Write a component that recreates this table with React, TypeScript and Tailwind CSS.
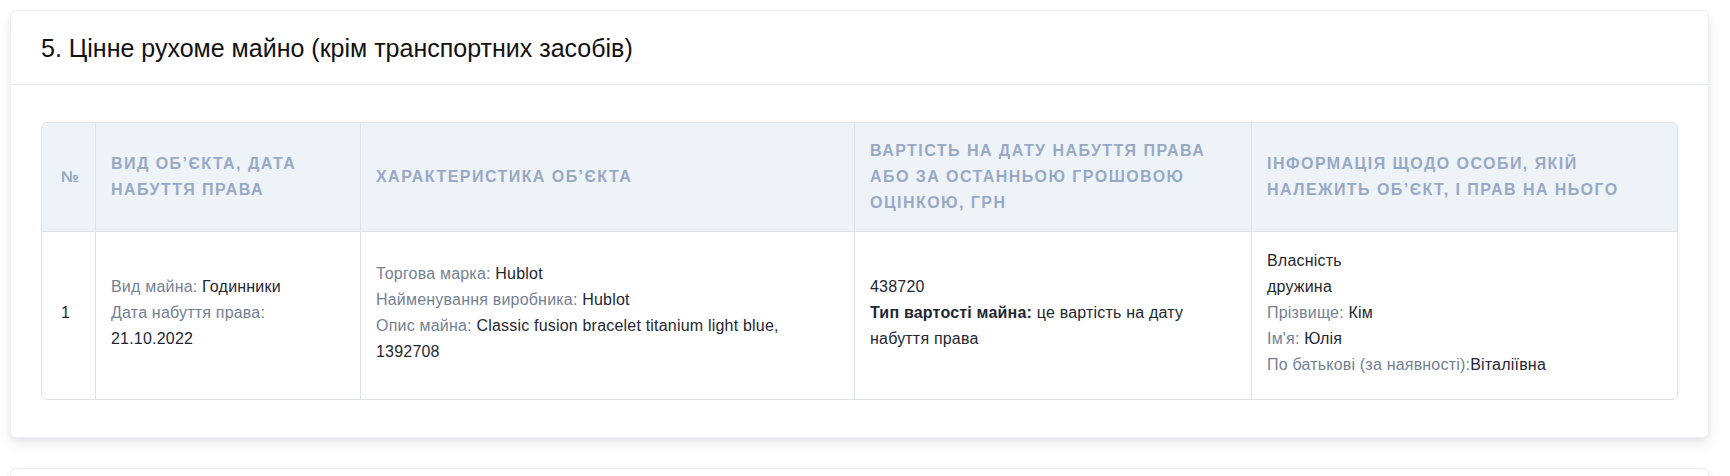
type Line = { label?: string; value?: string; bold?: boolean };

const cellBase = "border-l border-[#dfe3e8] px-[15px] align-middle";
const thClass = `${cellBase} h-[109px] border-b bg-[#eef3f8] text-left text-[16px] font-bold uppercase leading-[26px] tracking-[1.45px] text-[#98a9c6]`;
const tdClass = `${cellBase} h-[167px] pb-[5px] text-[16px] leading-[26px] tracking-[0.2px] text-[#1f2733]`;

const columns = [
  { title: "№", width: "w-[53px]" },
  { title: "Вид об’єкта, дата набуття права", width: "w-[265px]" },
  { title: "Характеристика об’єкта", width: "w-[494px]" },
  { title: "Вартість на дату набуття права або за останньою грошовою оцінкою, грн", width: "w-[397px]" },
  { title: "Інформація щодо особи, якій належить об’єкт, і прав на нього", width: "" },
];

const rows: Line[][][] = [
  [
    [{ value: "1" }],
    [
      { label: "Вид майна:", value: "Годинники" },
      { label: "Дата набуття права:", value: "21.10.2022" },
    ],
    [
      { label: "Торгова марка:", value: "Hublot" },
      { label: "Найменування виробника:", value: "Hublot" },
      { label: "Опис майна:", value: "Classic fusion bracelet titanium light blue, 1392708" },
    ],
    [
      { value: "438720" },
      { label: "Тип вартості майна:", value: "це вартість на дату набуття права", bold: true },
    ],
    [
      { value: "Власність" },
      { value: "дружина" },
      { label: "Прізвище:", value: "Кім" },
      { label: "Ім'я:", value: "Юлія" },
      { label: "По батькові (за наявності):", value: "Віталіївна" },
    ],
  ],
];

function CellLine({ line, tight }: { line: Line; tight?: boolean }) {
  return (
    <div>
      {line.label && (
        <span className={line.bold ? "font-bold text-[#1f2733]" : "text-[#748194]"}>{line.label}</span>
      )}
      {line.label && !tight ? " " : null}
      {line.value}
    </div>
  );
}

export default function App() {
  return (
    <div className="min-h-screen bg-white pl-[10px] pr-[21px] pt-[10px] font-['Liberation_Sans',Arial,sans-serif]">
      <section className="rounded-md border border-[#eceff4] bg-white shadow-[0_7px_14px_0_rgba(65,69,88,0.08),0_3px_6px_0_rgba(0,0,0,0.05)]">
        <div className="flex h-[74px] items-center border-b border-[#e6e9ee] px-[30px]">
          <h2 className="text-[25px] font-normal leading-[1.2] text-[#111]">
            5. Цінне рухоме майно (крім транспортних засобів)
          </h2>
        </div>

        <div className="px-[30px] py-[37px]">
          <div className="overflow-hidden rounded-md border border-[#dfe3e8]">
            <table className="w-full table-fixed border-separate border-spacing-0">
              <thead>
                <tr>
                  {columns.map((c, i) => (
                    <th
                      key={i}
                      className={`${thClass} ${c.width} ${i === 0 ? "border-l-0 pl-[19px]" : ""}`}
                    >
                      {c.title}
                    </th>
                  ))}
                </tr>
              </thead>
              <tbody>
                {rows.map((row, r) => (
                  <tr key={r}>
                    {row.map((cell, i) => (
                      <td key={i} className={`${tdClass} ${i === 0 ? "border-l-0 pl-[19px]" : ""}`}>
                        {cell.map((line, j) => (
                          <CellLine key={j} line={line} tight={i === 4 && j === 4} />
                        ))}
                      </td>
                    ))}
                  </tr>
                ))}
              </tbody>
            </table>
          </div>
        </div>
      </section>

      <section className="mt-[30px] h-[60px] rounded-md border border-[#eceff4] bg-white shadow-[0_7px_14px_0_rgba(65,69,88,0.08),0_3px_6px_0_rgba(0,0,0,0.05)]" />
    </div>
  );
}
